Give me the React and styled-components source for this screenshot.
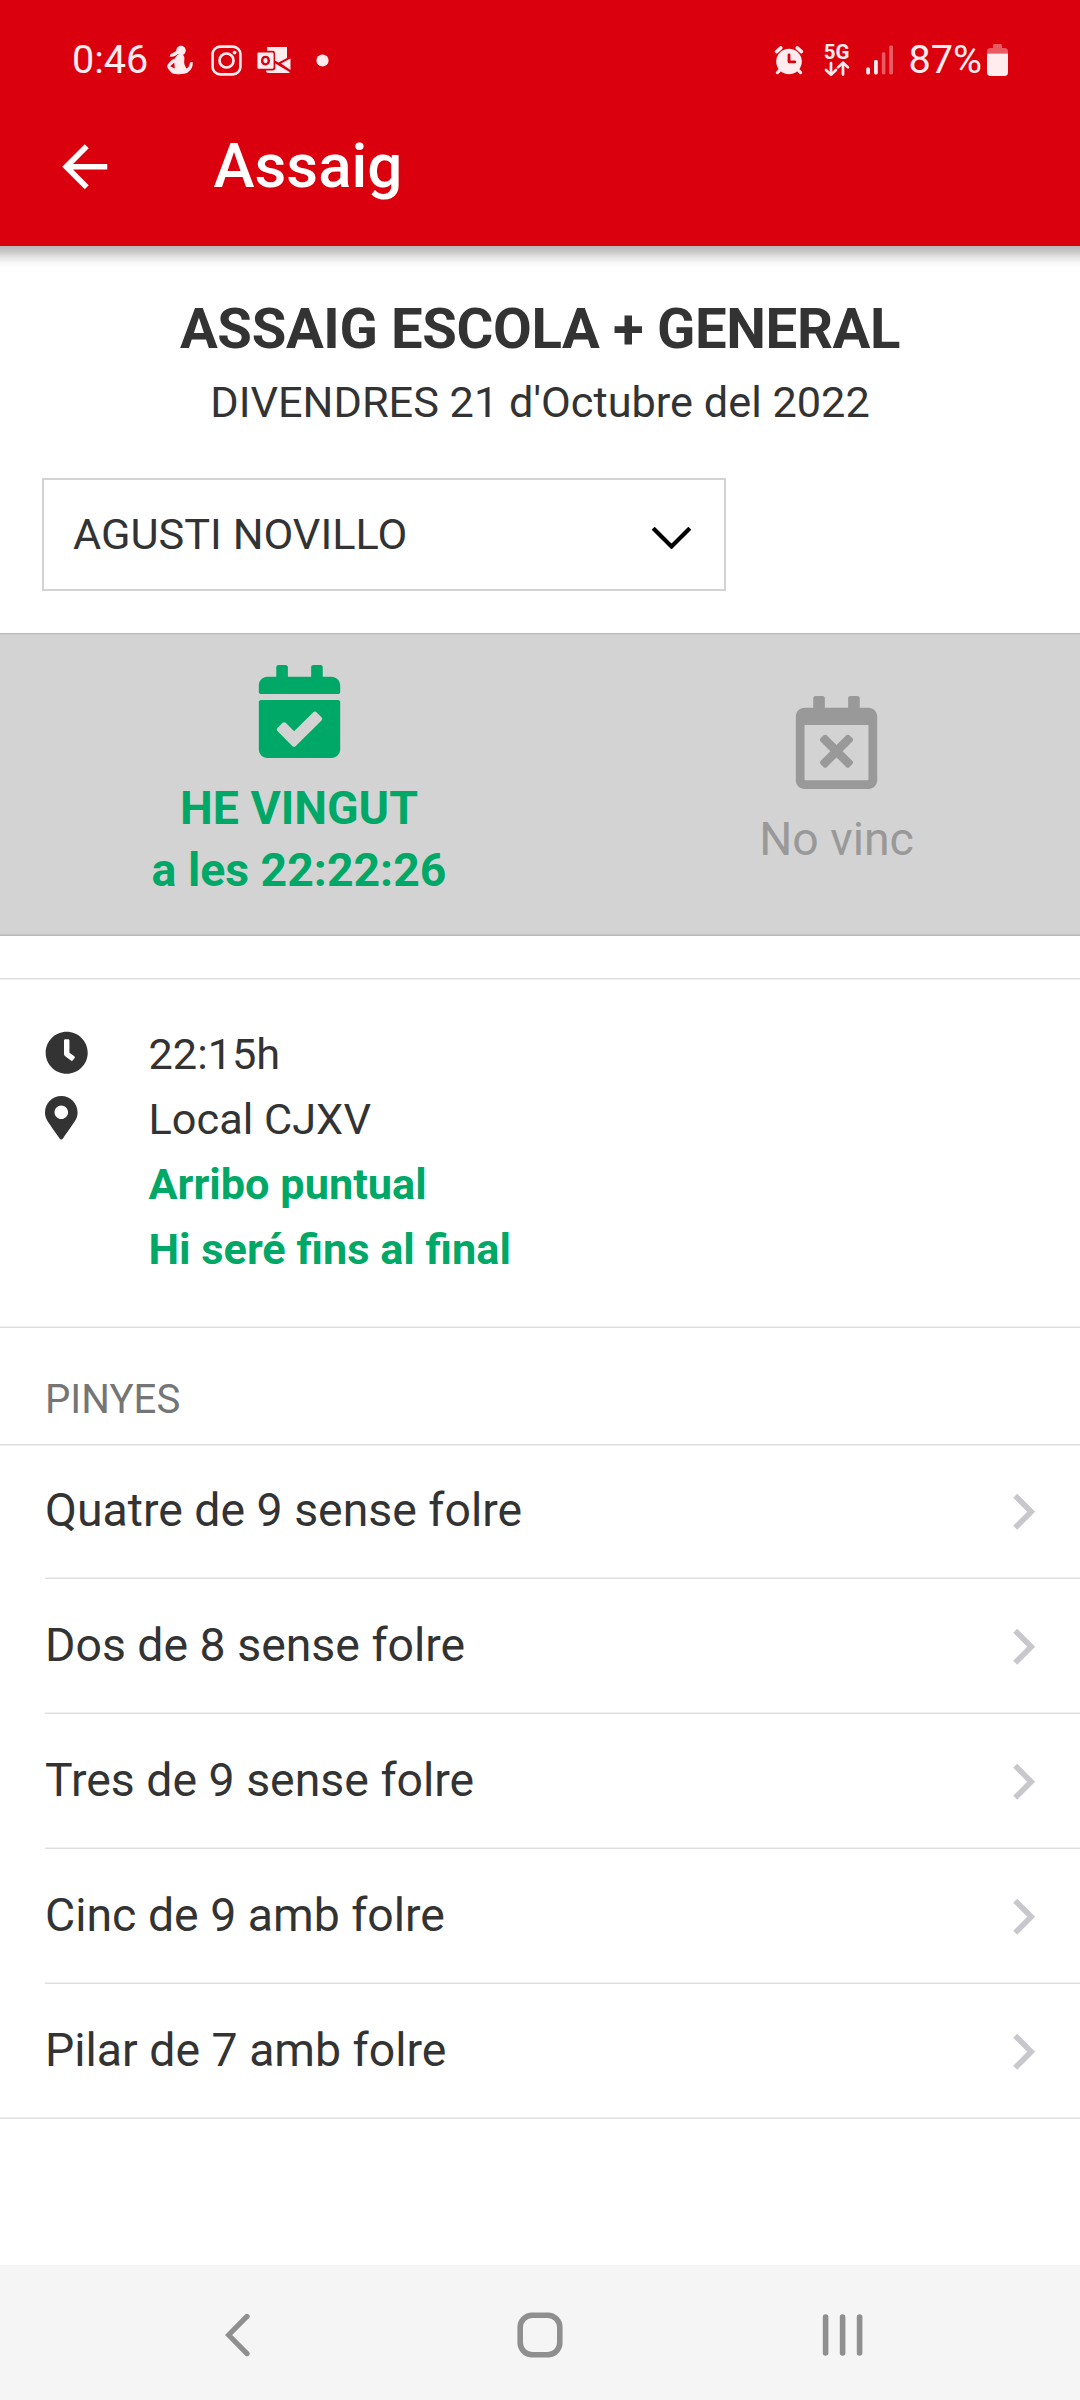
import React from 'react';
import styled, { createGlobalStyle } from 'styled-components';
import { FaCalendarCheck, FaRegCalendarTimes, FaClock, FaMapMarkerAlt } from 'react-icons/fa';
import { MdArrowBack } from 'react-icons/md';

const RED = '#db000d';
const GREEN = '#00a868';
const TEXT = '#333333';
const STATUS = '#ffecee';

const GlobalStyle = createGlobalStyle`
  *, *::before, *::after { box-sizing: border-box; }
  body {
    margin: 0;
    background: #ffffff;
    color: ${TEXT};
    font-family: Roboto, "Noto Sans", sans-serif;
  }
  svg { display: block; flex: none; }
`;

const Screen = styled.div`
  display: flex;
  flex-direction: column;
  width: 1080px;
  height: 2400px;
  background: #ffffff;
  overflow: hidden;
`;

const Header = styled.header`
  position: relative;
  flex: none;
  height: 246px;
  background: ${RED};
  color: #ffffff;
  &::after {
    content: '';
    position: absolute;
    left: 0;
    right: 0;
    top: 100%;
    height: 22px;
    background: linear-gradient(
      to bottom,
      rgba(0, 0, 0, 0.28) 0%,
      rgba(0, 0, 0, 0.22) 25%,
      rgba(0, 0, 0, 0.11) 50%,
      rgba(0, 0, 0, 0.03) 75%,
      rgba(0, 0, 0, 0) 100%
    );
  }
`;

const StatusBar = styled.div`
  display: flex;
  justify-content: space-between;
  height: 88px;
  padding: 32px 72px 0 72px;
  color: ${STATUS};
`;

const StatusGroup = styled.div`
  display: flex;
  align-items: center;
  height: 56px;
`;

const StatusText = styled.span`
  font-size: 39.6px;
  line-height: 56px;
  white-space: nowrap;
  width: ${(p) => p.$width}px;
  margin-left: ${(p) => p.$gap || 0}px;
`;

const StatusIcon = styled.svg`
  margin-left: ${(p) => p.$gap}px;
`;

const Network = styled.div`
  display: flex;
  flex-direction: column;
  align-items: center;
  width: 26px;
  margin-left: 20px;
`;

const NetworkLabel = styled.span`
  font-size: 20.5px;
  font-weight: 700;
  line-height: 16px;
  letter-spacing: -0.2px;
`;

const AppBar = styled.div`
  display: flex;
  align-items: center;
  height: 158px;
  padding-left: 51px;
`;

const BarTitle = styled.h1`
  margin: 0 0 2px 95px;
  font-size: 61.875px;
  font-weight: 500;
  line-height: 80px;
`;

const Heading = styled.h2`
  margin: 46px 0 0;
  text-align: center;
  font-size: 56.25px;
  font-weight: 700;
  line-height: 74px;
  letter-spacing: -0.36px;
`;

const DateLine = styled.p`
  margin: 5px 0 0;
  text-align: center;
  font-size: 43.3px;
  line-height: 64px;
`;

const Picker = styled.div`
  display: flex;
  align-items: center;
  justify-content: space-between;
  width: 684px;
  height: 113px;
  margin: 43px 0 0 42px;
  padding: 0 31.5px 0 29px;
  border: 2px solid #d3d3d3;
  font-size: 43.3px;
`;

const Attendance = styled.section`
  display: grid;
  grid-template-columns: 598px 477px;
  flex: none;
  height: 303px;
  margin-top: 42px;
  padding-bottom: 3px;
  background: #d3d3d3;
  box-shadow: inset 0 1px #b9b9b9, inset 0 2px #cccccc, inset 0 -1px #b9b9b9, inset 0 -2px #c6c6c6;
`;

const Choice = styled.div`
  display: flex;
  flex-direction: column;
  align-items: center;
  justify-content: center;
  gap: 19px;
  color: ${(p) => (p.$active ? GREEN : '#999999')};
  font-size: 46.4px;
  font-weight: ${(p) => (p.$active ? 700 : 400)};
  line-height: 62px;
  text-align: center;
`;

const Hairline = styled.div`
  flex: none;
  height: 2px;
  margin-top: ${(p) => p.$gap || 0}px;
  background: linear-gradient(
    to bottom,
    ${(p) => (p.$flip ? '#f0f0f0' : '#dedede')} 50%,
    ${(p) => (p.$flip ? '#dedede' : '#f0f0f0')} 50%
  );
`;

const Info = styled.section`
  padding: 42px 0 44px 45px;
`;

const InfoRow = styled.div`
  display: grid;
  grid-template-columns: 103.5px 1fr;
  align-items: center;
  height: 65px;
  font-size: 43.3px;
  line-height: 65px;
  font-weight: ${(p) => (p.$strong ? 700 : 400)};
  color: ${(p) => (p.$strong ? GREEN : TEXT)};
`;

const ClockIcon = styled(FaClock)`
  width: 43.4px;
  height: 43.4px;
  margin-bottom: 3px;
`;

const MarkerIcon = styled(FaMapMarkerAlt)`
  width: 32.6px;
  height: 43.4px;
  margin-bottom: 3px;
`;

const ListTitle = styled.h3`
  margin: 0;
  padding: 49px 0 21px 45px;
  font-size: 40.2px;
  font-weight: 400;
  line-height: 46px;
  color: #757575;
`;

const List = styled.ul`
  list-style: none;
  margin: -2px 0 0;
  padding: 0 0 0 45px;
`;

const Item = styled.li`
  display: flex;
  align-items: center;
  justify-content: space-between;
  height: 135px;
  padding-right: 44px;
  border-bottom: 1px solid #dedede;
  box-shadow: inset 0 -1px #f0f0f0;
  font-size: 46.4px;
  line-height: 62px;
  &:last-child {
    margin-left: -45px;
    padding-left: 45px;
  }
`;

const ItemLabel = styled.span`
  margin-bottom: 2px;
`;

const Chevron = styled.svg`
  margin-top: 1px;
`;

const NavBar = styled.nav`
  display: grid;
  grid-template-columns: 251px 578px 251px;
  flex: none;
  height: 135px;
  margin-top: auto;
  background: #f5f5f5;
  align-items: center;
  padding-top: 5px;
`;

const NavSlot = styled.div`
  display: flex;
  justify-content: ${(p) => p.$align};
  margin-left: ${(p) => p.$shift || 0}px;
`;

const items = [
  'Quatre de 9 sense folre',
  'Dos de 8 sense folre',
  'Tres de 9 sense folre',
  'Cinc de 9 amb folre',
  'Pilar de 7 amb folre',
];

function StatusLeft() {
  return (
    <StatusGroup>
      <StatusText $width={77}>0:46</StatusText>
      <StatusIcon $gap={17} width="28" height="30" viewBox="0 0 28 30" fill={STATUS}>
        <circle cx="15" cy="5.6" r="4.8" />
        <path d="M12 5.5C9.5 6 8 7.5 4.5 9.2L3.6 11.6C7 12.2 9.5 11 12.5 8.5Z" />
        <path d="M11.5 10C13 9.2 16 9 17.5 10.5C19.5 13 17.5 16 18.5 19.5L20.3 23.5C22.5 22.5 23.5 21 24 17.4L26.6 17C27.2 21.5 25.5 24.5 21.8 27.5C18 29.8 9.5 29.4 6 28.2C4.2 26.5 1.8 23.8 1 21.2C2 18.5 5.5 14.5 8.5 13.8Z" />
        <path d="M4.2 21.2L8.3 17.5L8.8 23.4Z" fill={RED} />
      </StatusIcon>
      <StatusIcon $gap={17} width="31" height="31" viewBox="0 0 31 31" fill="none" stroke={STATUS}>
        <rect x="1.6" y="1.6" width="27.8" height="27.8" rx="7.5" strokeWidth="2.6" />
        <circle cx="15.5" cy="15.5" r="7" strokeWidth="2.7" />
        <circle cx="23.6" cy="7.6" r="1.9" fill={STATUS} stroke="none" />
      </StatusIcon>
      <StatusIcon $gap={14.5} width="34" height="28" viewBox="0 0 34 28" fill={STATUS}>
        <path d="M10 1H30V12L21.5 16.5L18 14.5V7.5C18 5.5 17 4.8 15.5 4.8H10Z" />
        <path d="M33.5 12.5V24L24 17.5Z" />
        <path d="M9 24.5H15.5C17.5 24.5 18.3 23.5 18.3 21.5V17.5L33 26.2C32.7 26.8 32 27 31.5 27H11C9.8 27 9 26 9 24.5Z" />
        <path
          fillRule="evenodd"
          d="M1.5 6.5H15C16 6.5 16.6 7.1 16.6 8V21.3C16.6 22.2 16 22.8 15 22.8H1.5C.8 22.8.4 22.2.4 21.3V8C.4 7.1.8 6.5 1.5 6.5ZM8.5 9.8C5.7 9.8 4 11.8 4 14.7C4 17.5 5.7 19.4 8.4 19.4C11.2 19.4 13 17.4 13 14.6C13 11.7 11.2 9.8 8.5 9.8ZM8.5 12C10 12 10.6 13.2 10.6 14.7C10.6 16.2 9.8 17.2 8.5 17.2C7.1 17.2 6.4 16.1 6.4 14.6C6.4 13.1 7.1 12 8.5 12Z"
        />
      </StatusIcon>
      <StatusIcon $gap={25} width="13" height="13" viewBox="0 0 13 13" fill={STATUS}>
        <circle cx="6.5" cy="6.5" r="6.1" />
      </StatusIcon>
    </StatusGroup>
  );
}

function StatusRight() {
  return (
    <StatusGroup>
      <StatusIcon $gap={0} width="30" height="30" viewBox="0 0 30 30" fill={STATUS} stroke={STATUS} strokeLinecap="round">
        <circle cx="15" cy="16.5" r="12.8" stroke="none" />
        <path d="M2.6 6.6L6.8 2.9M27.4 6.6L23.2 2.9" strokeWidth="3.6" />
        <path d="M5.5 25.5L3.4 27.6M24.5 25.5L26.6 27.6" strokeWidth="3.2" />
        <path d="M15 9.8V16.8H20.8" fill="none" stroke={RED} strokeWidth="2.8" strokeLinejoin="round" />
      </StatusIcon>
      <Network>
        <NetworkLabel>5G</NetworkLabel>
        <svg width="26" height="17" viewBox="0 0 26 17" fill="none" stroke={STATUS} strokeWidth="2.7" strokeLinecap="round" strokeLinejoin="round">
          <path d="M7 3V14.6M2 10L7 14.9L12 10" />
          <path d="M19 14.6V3M14 7.4L19 2.6L24 7.4" />
        </svg>
      </Network>
      <StatusIcon $gap={16.5} width="28" height="30" viewBox="0 0 28 30" fill={STATUS}>
        <rect x="0.2" y="22.5" width="3.8" height="7" rx="1.4" />
        <rect x="8" y="15" width="3.8" height="14.5" rx="1.4" />
        <rect x="15.8" y="7.3" width="3.6" height="22.2" rx="1.4" opacity="0.38" />
        <rect x="23.2" y="0.5" width="3.8" height="29" rx="1.4" opacity="0.38" />
      </StatusIcon>
      <StatusText $width={76} $gap={14.5}>87%</StatusText>
      <StatusIcon $gap={2.5} width="21" height="32" viewBox="0 0 21 32" fill={STATUS}>
        <path d="M0 9.6V7.5C0 5 1.5 4 3.5 4H6V1.5C6 .6 6.6 0 7.5 0H13.5C14.4 0 15 .6 15 1.5V4H17.5C19.5 4 21 5 21 7.5V9.6Z" opacity="0.38" />
        <path d="M0 9.6H21V28.5C21 30.8 19.8 32 17.5 32H3.5C1.2 32 0 30.8 0 28.5Z" />
      </StatusIcon>
    </StatusGroup>
  );
}

export default function App() {
  return (
    <>
      <GlobalStyle />
      <Screen>
        <Header>
          <StatusBar>
            <StatusLeft />
            <StatusRight />
          </StatusBar>
          <AppBar>
            <MdArrowBack size={67.5} />
            <BarTitle>Assaig</BarTitle>
          </AppBar>
        </Header>

        <Heading>ASSAIG ESCOLA + GENERAL</Heading>
        <DateLine>DIVENDRES 21 d'Octubre del 2022</DateLine>

        <Picker>
          <span>AGUSTI NOVILLO</span>
          <svg width="44" height="28" viewBox="0 0 44 28" fill="none" stroke="#000000" strokeWidth="4.2">
            <path d="M4.2 7.2L22.5 25.5L40.8 7.2" />
          </svg>
        </Picker>

        <Attendance>
          <Choice $active>
            <FaCalendarCheck size={93} />
            <div>
              HE VINGUT
              <br />a les 22:22:26
            </div>
          </Choice>
          <Choice>
            <FaRegCalendarTimes size={93} />
            <div>No vinc</div>
          </Choice>
        </Attendance>

        <Hairline $gap={42} />
        <Info>
          <InfoRow>
            <ClockIcon />
            <span>22:15h</span>
          </InfoRow>
          <InfoRow>
            <MarkerIcon />
            <span>Local CJXV</span>
          </InfoRow>
          <InfoRow $strong>
            <span />
            <span>Arribo puntual</span>
          </InfoRow>
          <InfoRow $strong>
            <span />
            <span>Hi seré fins al final</span>
          </InfoRow>
        </Info>
        <Hairline $flip />

        <ListTitle>PINYES</ListTitle>
        <Hairline />
        <List>
          {items.map((label) => (
            <Item key={label}>
              <ItemLabel>{label}</ItemLabel>
              <Chevron width="24" height="38" viewBox="0 0 24 38" fill="none" stroke="#c7c7cc" strokeWidth="5.6">
                <path d="M3.2 2.8L19.2 18.8L3.2 34.8" />
              </Chevron>
            </Item>
          ))}
        </List>

        <NavBar>
          <NavSlot $align="flex-end">
            <svg width="26" height="44" viewBox="0 0 26 44" fill="none" stroke="#8f8f8f" strokeWidth="5.2" strokeLinecap="round">
              <path d="M22 3.4L3.6 22L22 40.6" strokeLinejoin="miter" />
            </svg>
          </NavSlot>
          <NavSlot $align="center">
            <svg width="46" height="46" viewBox="0 0 46 46" fill="none" stroke="#8f8f8f" strokeWidth="5.6">
              <rect x="3.2" y="3.2" width="39.6" height="39.6" rx="12" />
            </svg>
          </NavSlot>
          <NavSlot $align="flex-start" $shift={-7}>
            <svg width="42" height="44" viewBox="0 0 42 44" stroke="#8f8f8f" strokeWidth="5.6" strokeLinecap="round">
              <path d="M3.6 4V40M20.6 4V40M37.6 4V40" />
            </svg>
          </NavSlot>
        </NavBar>
      </Screen>
    </>
  );
}
